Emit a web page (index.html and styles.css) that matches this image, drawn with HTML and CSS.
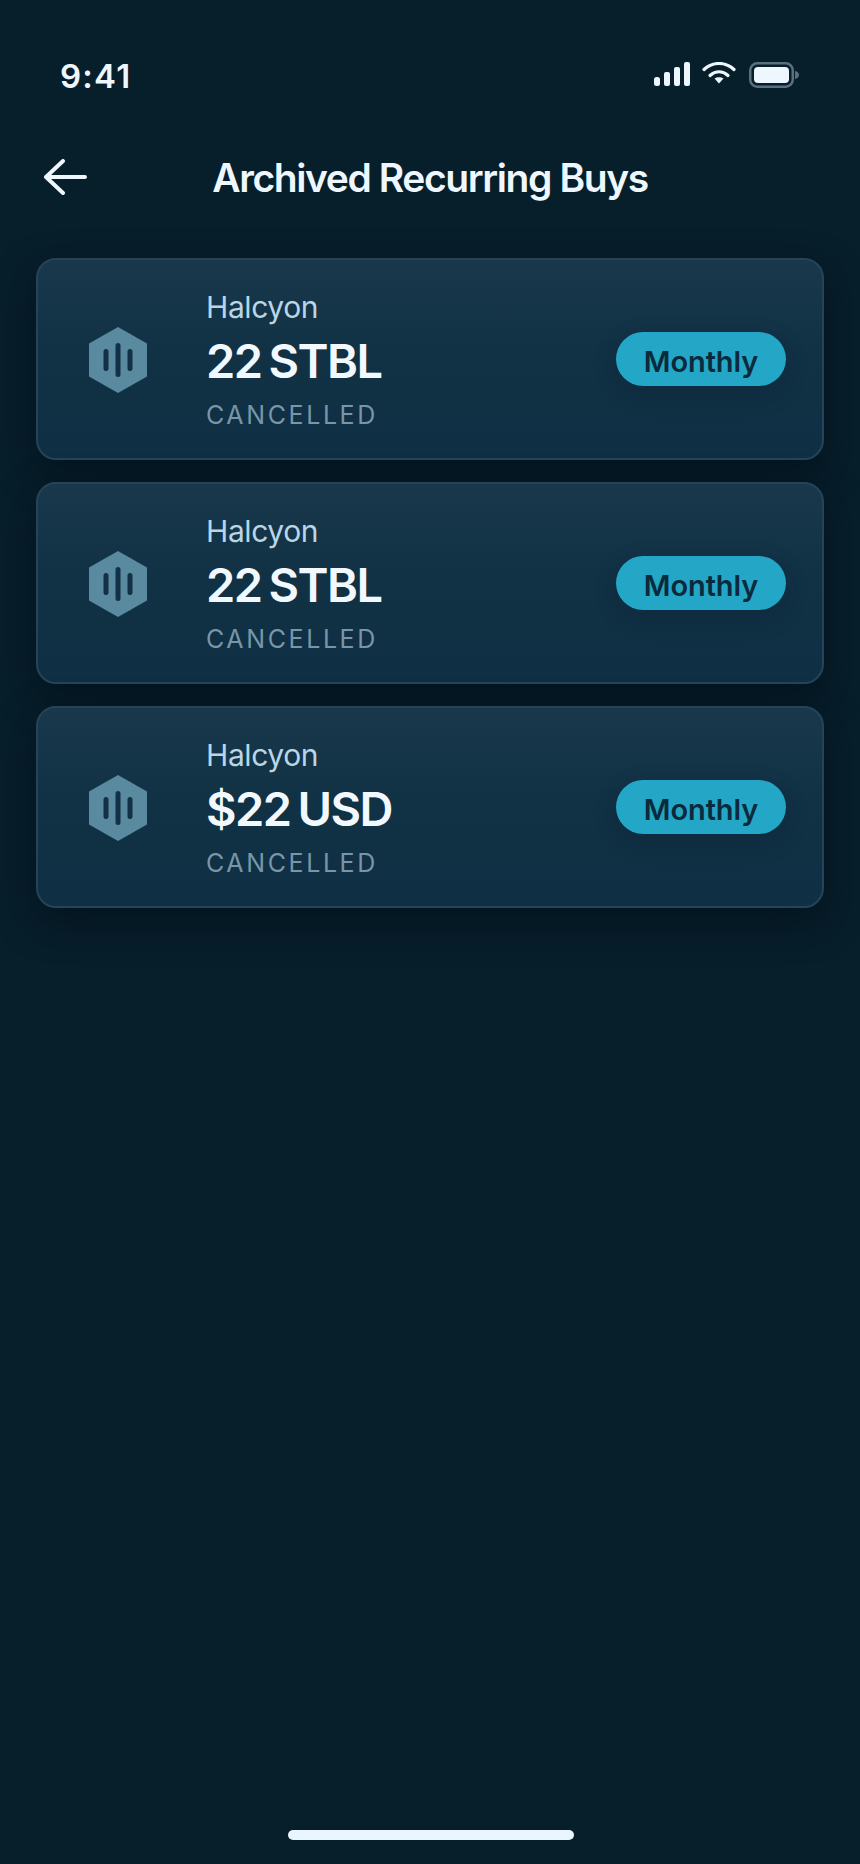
FILE: index.html
```html
<!DOCTYPE html>
<html lang="en">
<head>
<meta charset="utf-8">
<title>Archived Recurring Buys</title>
<link rel="stylesheet" href="styles.css">
</head>
<body>
<div class="screen">
  <div class="status">
    <span class="time">9:41</span>
    <div class="status-icons">
      <svg class="signal" width="36" height="24" viewBox="0 0 36 24"><rect x="0" y="15" width="6" height="9" rx="2.5"/><rect x="10" y="10" width="6" height="14" rx="2"/><rect x="20" y="5" width="6" height="19" rx="2"/><rect x="30" y="0" width="6" height="24" rx="2"/></svg>
      <svg class="wifi" width="34" height="22" viewBox="0 0 34 22"><path class="wave" d="M2 7.500C10.500 -0.500 23.500 -0.500 32 7.500"/><path class="wave" d="M8 13.500C13.500 8.500 20.500 8.500 26 13.500"/><path class="dot" d="M12.500 16.500C15 14.800 19 14.800 21.500 16.500L17 21.500Z"/></svg>
      <svg class="battery" width="50" height="26" viewBox="0 0 50 26"><rect class="shell" x="1.250" y="1.250" width="42.500" height="23.500" rx="7"/><rect class="charge" x="5" y="5" width="35" height="16" rx="4"/><path class="cap" d="M46 9C48.500 9.500 50 11 50 13S48.500 16.500 46 17Z"/></svg>
    </div>
  </div>
  <header class="nav">
    <svg class="back" width="44" height="36" viewBox="0 0 44 36"><path d="M42 18H3M20 2 3 18l17 16"/></svg>
    <h1 class="title">Archived Recurring Buys</h1>
  </header>
  <main class="list">
    <article class="card">
      <svg class="hex" width="58" height="66" viewBox="0 0 58 66"><path class="hex-body" d="M29 0 58 16.500V49.500L29 66 0 49.500V16.500Z"/><rect class="hex-bar" x="14.500" y="22" width="5" height="22" rx="2.500"/><rect class="hex-bar" x="26.500" y="16" width="5" height="34" rx="2.500"/><rect class="hex-bar" x="38.500" y="22" width="5" height="22" rx="2.500"/></svg>
      <div class="info">
        <div class="name">Halcyon</div>
        <div class="amount">22 STBL</div>
        <div class="state">CANCELLED</div>
      </div>
      <span class="pill">Monthly</span>
    </article>
    <article class="card">
      <svg class="hex" width="58" height="66" viewBox="0 0 58 66"><path class="hex-body" d="M29 0 58 16.500V49.500L29 66 0 49.500V16.500Z"/><rect class="hex-bar" x="14.500" y="22" width="5" height="22" rx="2.500"/><rect class="hex-bar" x="26.500" y="16" width="5" height="34" rx="2.500"/><rect class="hex-bar" x="38.500" y="22" width="5" height="22" rx="2.500"/></svg>
      <div class="info">
        <div class="name">Halcyon</div>
        <div class="amount">22 STBL</div>
        <div class="state">CANCELLED</div>
      </div>
      <span class="pill">Monthly</span>
    </article>
    <article class="card">
      <svg class="hex" width="58" height="66" viewBox="0 0 58 66"><path class="hex-body" d="M29 0 58 16.500V49.500L29 66 0 49.500V16.500Z"/><rect class="hex-bar" x="14.500" y="22" width="5" height="22" rx="2.500"/><rect class="hex-bar" x="26.500" y="16" width="5" height="34" rx="2.500"/><rect class="hex-bar" x="38.500" y="22" width="5" height="22" rx="2.500"/></svg>
      <div class="info">
        <div class="name">Halcyon</div>
        <div class="amount">$22 USD</div>
        <div class="state">CANCELLED</div>
      </div>
      <span class="pill">Monthly</span>
    </article>
  </main>
  <div class="home-bar"></div>
</div>
</body>
</html>
```
FILE: styles.css
```css
* { box-sizing: border-box; }
html, body { margin: 0; padding: 0; }
body { background: #071e2b; font-family: Inter, "Liberation Sans", sans-serif; color: #eef7fe; }
.screen { width: 860px; height: 1864px; display: flex; flex-direction: column; background: #071e2b; overflow: hidden; }
.status { height: 122px; padding: 56px 61px 0 60px; display: flex; justify-content: space-between; align-items: flex-start; }
.time { font-size: 33px; line-height: 40px; font-weight: 600; letter-spacing: 1.2px; color: #eef7fe; }
.status-icons { display: flex; align-items: flex-start; padding-top: 6px; }
.signal { fill: #eef7fe; margin-right: 12px; }
.wifi { margin-right: 13px; }
.wave { fill: none; stroke: #eef7fe; stroke-width: 3.2; stroke-linecap: round; }
.dot { fill: #eef7fe; }
.shell { fill: none; stroke: #5b6f7d; stroke-width: 2.5; }
.charge { fill: #eef7fe; }
.cap { fill: #5b6f7d; }
.nav { height: 108px; position: relative; display: flex; align-items: center; justify-content: center; margin-bottom: 28px; padding-top: 3px; }
.back { position: absolute; left: 43px; top: 37px; fill: none; stroke: #eef7fe; stroke-width: 4; stroke-linecap: round; stroke-linejoin: round; }
.title { margin: 0; font-size: 39px; line-height: 50px; font-weight: 600; letter-spacing: -1.4px; color: #eef7fe; }
.list { display: flex; flex-direction: column; gap: 22px; padding: 0 36px; }
.card { height: 202px; display: flex; align-items: center; padding: 0 36px 0 51px; border: 2px solid #254457; border-radius: 20px; background: linear-gradient(180deg, #19384b 0%, #113145 45%, #0f2f44 100%); box-shadow: 0 14px 36px rgba(2, 12, 18, 0.5); }
.hex { flex: none; margin: 2px 59px 0 0; }
.hex-body { fill: #5a8a9f; }
.hex-bar { fill: #123146; }
.info { flex: 1; display: flex; flex-direction: column; padding-top: 2px; }
.name { font-size: 30px; line-height: 38px; font-weight: 400; letter-spacing: -0.4px; color: #b9d6e6; margin-bottom: 5px; }
.amount { font-size: 47px; line-height: 60px; font-weight: 600; letter-spacing: -1.6px; word-spacing: -3px; color: #f1f9ff; }
.state { font-size: 25px; line-height: 34px; font-weight: 400; letter-spacing: 2.6px; color: #7896a8; margin-top: 7px; }
.pill { flex: none; width: 170px; height: 54px; border-radius: 27px; background: #24a7c7; color: #0b2b3d; font-size: 29px; font-weight: 600; line-height: 59px; letter-spacing: -0.1px; text-align: center; box-shadow: 0 8px 24px rgba(4, 24, 36, 0.2); }
.home-bar { width: 286px; height: 10px; border-radius: 5px; background: #eaf6ff; margin: auto auto 24px 288px; }
```
